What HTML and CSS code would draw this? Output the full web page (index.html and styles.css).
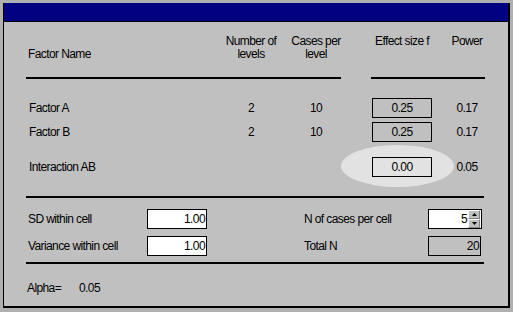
FILE: index.html
```html
<!DOCTYPE html>
<html lang="en">
<head>
    <meta charset="UTF-8">
    <title>Power - two factor design</title>
    <link rel="stylesheet" href="styles.css">
</head>
<body>
    <div class="window">
        <div class="titlebar"></div>
        <div class="panel">
            <div class="frow head">
                <div class="hd name">Factor Name</div>
                <div class="hd mid">Number of<br>levels</div>
                <div class="hd mid">Cases per<br>level</div>
                <div></div>
                <div class="hd mid top">Effect size f</div>
                <div></div>
                <div class="hd mid top">Power</div>
            </div>

            <div class="frow rules">
                <div class="rule rule-left"></div>
                <div class="rule rule-right"></div>
            </div>

            <div class="frow first">
                <div class="name">Factor A</div>
                <div class="mid">2</div>
                <div class="mid">10</div>
                <div></div>
                <div class="field"><span>0.25</span></div>
                <div></div>
                <div class="mid">0.17</div>
            </div>
            <div class="frow second">
                <div class="name">Factor B</div>
                <div class="mid">2</div>
                <div class="mid">10</div>
                <div></div>
                <div class="field"><span>0.25</span></div>
                <div></div>
                <div class="mid">0.17</div>
            </div>
            <div class="frow inter">
                <div class="name">Interaction AB</div>
                <div></div>
                <div></div>
                <div></div>
                <div class="field highlight"><span>0.00</span></div>
                <div></div>
                <div class="mid">0.05</div>
            </div>

            <div class="rule wide after-table"></div>

            <div class="params">
                <div class="plabel">SD within cell</div>
                <div class="field input">1.00</div>
                <div></div>
                <div class="plabel">N of cases per cell</div>
                <div class="field input spin">
                    <span class="spin-value">5</span>
                    <span class="spin-btns">
                        <span class="spin-btn"><svg width="5" height="3" viewBox="0 0 5 3"><path d="M2.5 0L5 3H0z" fill="#000"/></svg></span>
                        <span class="spin-btn"><svg width="5" height="3" viewBox="0 0 5 3"><path d="M0 0H5L2.5 3z" fill="#000"/></svg></span>
                    </span>
                </div>

                <div class="plabel">Variance within cell</div>
                <div class="field input">1.00</div>
                <div></div>
                <div class="plabel">Total N</div>
                <div class="field total">20</div>
            </div>

            <div class="rule wide after-params"></div>

            <div class="alpha">
                <span class="alpha-label">Alpha=</span>
                <span>0.05</span>
            </div>
        </div>
    </div>
</body>
</html>
```

FILE: styles.css
```css
body { margin: 0; background: #b0b0b0; font-family: "Liberation Sans", Arial, sans-serif; font-size: 12px; letter-spacing: -0.6px; color: #000; }
.window { width: 504px; height: 303px; margin: 3px 0 0 3px; background: #c0c0c0; border-left: 1px solid #000; border-right: 2px solid #000; border-bottom: 2px solid #000; }
.titlebar { height: 18px; background: #000080; border-bottom: 1px solid #000; }
.panel { padding: 13px 0 0 22px; }

.frow { display: grid; grid-template-columns: 194px 62px 68px 22px 60px 14px 42px; align-items: center; height: 20px; line-height: 20px; }
.frow.head { height: 26px; line-height: 13px; align-items: end; }
.frow.head .top { align-self: start; }
.frow.rules { height: 2px; margin-top: 16px; }
.frow.first { margin-top: 19px; }
.frow.second { margin-top: 4px; }
.frow.inter { margin-top: 15px; }

.name { padding-left: 3px; white-space: nowrap; }
.hd.name { padding-left: 2px; }
.mid { text-align: center; white-space: nowrap; }

.rule { height: 2px; background: #000; }
.rule-left { grid-column: 1 / 4; margin-right: 9px; }
.rule-right { grid-column: 5 / 8; margin-left: -1px; margin-right: 3px; }
.rule.wide { width: 458px; }
.after-table { margin-top: 19px; }
.after-params { margin-top: 6px; }

.field { height: 20px; box-sizing: border-box; border: 1px solid #000; line-height: 18px; text-align: center; position: relative; }
.field span { position: relative; }
.highlight::before { content: ""; position: absolute; left: -32px; top: -13px; width: 113px; height: 42px; border-radius: 50%; background: #e2e2e2; }
.highlight::after { content: ""; position: absolute; inset: -1px; border: 1px solid #000; }

.params { display: grid; grid-template-columns: 121px 60px 95px 126px 54px; grid-auto-rows: 20px; row-gap: 7px; margin-top: 11px; align-items: center; }
.plabel { padding-left: 2px; line-height: 20px; white-space: nowrap; }
.field.input { background: #fff; text-align: right; padding-right: 1px; }
.field.total { width: 53px; text-align: right; padding-right: 1px; }

.spin { display: flex; padding-right: 0; }
.spin-value { flex: 1; text-align: right; padding-right: 1px; }
.spin-btns { display: flex; flex-direction: column; width: 12px; }
.spin-btn { flex: 1; display: flex; align-items: center; justify-content: center; background: #c0c0c0; border-top: 1px solid #fff; border-left: 1px solid #fff; border-right: 1px solid #808080; border-bottom: 1px solid #808080; box-sizing: border-box; }
.spin-btn svg { display: block; }

.alpha { display: flex; margin-top: 14px; height: 20px; line-height: 20px; padding-left: 1px; }
.alpha-label { width: 52px; }
```
